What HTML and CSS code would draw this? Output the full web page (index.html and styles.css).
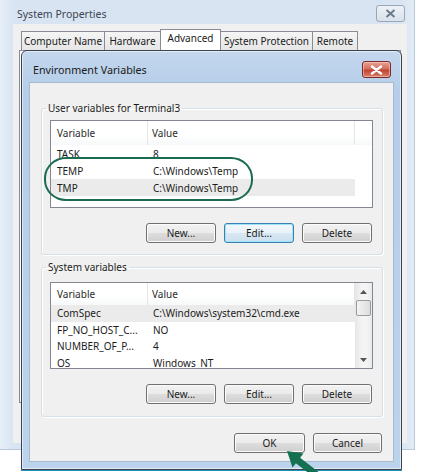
FILE: index.html
```html
<!DOCTYPE html>
<html lang="en">
<head>
<meta charset="utf-8">
<title>Environment Variables</title>
<link rel="stylesheet" href="styles.css">
</head>
<body>
<div class="desktop">
  <div class="win-outer">
    <div class="outer-title">
      <span class="outer-caption">System Properties</span>
      <span class="close-gray"><svg width="11" height="9" viewBox="0 0 11 9"><path d="M1.5 1 L9.5 8 M9.5 1 L1.5 8" stroke="#6d7a8a" stroke-width="2" fill="none"/></svg></span>
    </div>
    <div class="outer-body">
      <div class="tabs">
        <span class="tab t1">Computer Name</span>
        <span class="tab t2">Hardware</span>
        <span class="tab t3 active">Advanced</span>
        <span class="tab t4">System Protection</span>
        <span class="tab t5">Remote</span>
      </div>
      <div class="tab-page"></div>
    </div>
  </div>

  <div class="win-env">
    <div class="env-title">
      <span class="env-caption">Environment Variables</span>
      <span class="close-red"><svg width="13" height="10" viewBox="0 0 13 10"><path d="M2 1.5 L11 8.5 M11 1.5 L2 8.5" stroke="#ffffff" stroke-width="2.4" fill="none" stroke-linecap="round"/></svg></span>
    </div>
    <div class="env-body">
      <fieldset class="group group-user">
        <legend>User variables for Terminal3</legend>
        <div class="list list-user">
          <div class="list-head">
            <span class="c1">Variable</span><span class="c2">Value</span><span class="c3"></span>
          </div>
          <div class="row"><span class="c1">TASK</span><span class="c2">8</span></div>
          <div class="row"><span class="c1">TEMP</span><span class="c2">C:\Windows\Temp</span></div>
          <div class="row sel"><span class="c1">TMP</span><span class="c2">C:\Windows\Temp</span></div>
        </div>
        <div class="btns">
          <button class="btn">New...</button>
          <button class="btn focus">Edit...</button>
          <button class="btn">Delete</button>
        </div>
      </fieldset>

      <fieldset class="group group-sys">
        <legend>System variables</legend>
        <div class="list list-sys">
          <div class="list-main">
            <div class="list-head">
              <span class="c1">Variable</span><span class="c2">Value</span>
            </div>
            <div class="row sel"><span class="c1">ComSpec</span><span class="c2">C:\Windows\system32\cmd.exe</span></div>
            <div class="row"><span class="c1">FP_NO_HOST_C...</span><span class="c2">NO</span></div>
            <div class="row"><span class="c1">NUMBER_OF_P...</span><span class="c2">4</span></div>
            <div class="row"><span class="c1">OS</span><span class="c2">Windows_NT</span></div>
          </div>
          <div class="vscroll">
            <span class="arr"><svg width="7" height="4" viewBox="0 0 7 4"><path d="M0 4 L3.5 0 L7 4Z" fill="#555"/></svg></span>
            <span class="thumb"></span>
            <span class="track"></span>
            <span class="arr"><svg width="7" height="4" viewBox="0 0 7 4"><path d="M0 0 L3.5 4 L7 0Z" fill="#555"/></svg></span>
          </div>
        </div>
        <div class="btns">
          <button class="btn">New...</button>
          <button class="btn">Edit...</button>
          <button class="btn">Delete</button>
        </div>
      </fieldset>

      <div class="dlg-btns">
        <button class="btn ok">OK</button>
        <button class="btn cancel">Cancel</button>
      </div>
    </div>
  </div>

  <div class="highlight"></div>
  <svg class="arrow" width="421" height="472" viewBox="0 0 421 472">
    <polygon points="287,451 303.5,453.4 300.1,457.7 319.9,473 315.7,478.6 295.9,463.3 292.5,467.6" fill="#137050"/>
  </svg>
</div>
</body>
</html>
```

FILE: styles.css
```css
* { box-sizing: border-box; }

html, body {
  margin: 0;
  padding: 0;
  background: #ffffff;
}

body {
  font-family: "Noto Sans", "Open Sans", sans-serif;
  font-size: 10px;
  color: #1b1b1b;
}

.desktop {
  position: relative;
  width: 421px;
  height: 472px;
  overflow: hidden;
  background: #ffffff;
}

/* ---------- outer window (System Properties) ---------- */
.win-outer {
  position: absolute;
  left: 0;
  top: 0;
  width: 415px;
  height: 450px;
  background: linear-gradient(90deg, #e6eef8 0px, #d8e4f2 14px, #d8e4f2 400px, #e3ecf6 415px);
  border-right: 1px solid #b9c9dc;
  border-bottom: 1px solid #b9c9dc;
  display: flex;
  flex-direction: column;
}

.outer-title {
  height: 24px;
  display: flex;
  align-items: flex-start;
  padding-left: 17px;
}

.outer-caption {
  margin-top: 6px;
  font-size: 10.5px;
  line-height: 16px;
  color: #3c4652;
}

.close-gray {
  margin-left: auto;
  margin-right: 9px;
  margin-top: 5px;
  width: 29px;
  height: 17px;
  border: 1px solid #98a6b7;
  border-radius: 3px;
  background: linear-gradient(#eef2f7, #d9e1eb);
  display: flex;
  align-items: center;
  justify-content: center;
}

.outer-body {
  margin: 0 7px 6px 13px;
  flex: 1;
  background: #f0f0f0;
  padding: 5px 6px 40px 6px;
  display: flex;
  flex-direction: column;
}

.tabs {
  display: flex;
  align-items: flex-end;
  height: 21px;
  padding-left: 2px;
}

.tab {
  flex: none;
  height: 19px;
  border: 1px solid #898c95;
  border-bottom: none;
  border-left: none;
  background: linear-gradient(#f5f5f5, #e6e6e6);
  text-align: center;
  line-height: 19px;
  font-size: 10px;
  white-space: nowrap;
  color: #1b1b1b;
}

.tab.t1 { width: 84px; border-left: 1px solid #898c95; }
.tab.t2 { width: 56px; }
.tab.t3 { width: 60px; }
.tab.t4 { width: 92px; }
.tab.t5 { width: 45px; }

.tab.active {
  height: 22px;
  background: #ffffff;
  line-height: 17px;
  margin-bottom: -1px;
  position: relative;
  border-left: 1px solid #898c95;
  margin-left: -1px;
  width: 61px;
}

.tab-page {
  flex: 1;
  background: #fcfcfc;
  border: 1px solid #898c95;
}

/* ---------- Environment Variables window ---------- */
.win-env {
  position: absolute;
  left: 21px;
  top: 50px;
  width: 381px;
  height: 420px;
  border: 1px solid #3a4350;
  border-radius: 6px 6px 0 0;
  background: linear-gradient(#c3d7ee, #b5cde8 40px, #bcd3ec);
  box-shadow: inset 0 0 0 1px rgba(255,255,255,0.55);
  display: flex;
  flex-direction: column;
}

.win-env::after {
  content: "";
  position: absolute;
  left: -1px;
  right: -1px;
  bottom: -2px;
  height: 1px;
  background: #1e8fb5;
}

.env-title {
  height: 31px;
  flex: none;
  display: flex;
  align-items: flex-start;
  padding-left: 11px;
}

.env-caption {
  margin-top: 12px;
  font-size: 10.75px;
  line-height: 14px;
  color: #1a1a1a;
}

.close-red {
  margin-left: auto;
  margin-right: 10px;
  margin-top: 10px;
  width: 29px;
  height: 17px;
  border: 1px solid #7a2a2a;
  border-radius: 3px;
  background: linear-gradient(#e8a194 0%, #d3705f 45%, #c2422f 55%, #d5836c 100%);
  box-shadow: inset 0 0 0 1px rgba(255,210,200,0.55);
  display: flex;
  align-items: center;
  justify-content: center;
}

.env-body {
  flex: 1;
  margin: 0 7px 7px 7px;
  background: #f0f0f0;
  border: 1px solid #a7bad0;
  padding: 18px 10px 0 11px;
  display: flex;
  flex-direction: column;
}

/* ---------- group boxes ---------- */
.group {
  margin: 0;
  border: 1px solid #d5dfe5;
  border-radius: 3px;
  box-shadow: inset 1px 1px 0 #ffffff, 1px 1px 0 #ffffff;
  padding: 5px 9px 11px 8px;
  min-width: 0;
}

.group legend {
  margin-left: -4px;
  padding: 0 2px;
  line-height: 14px;
  font-size: 10px;
  color: #1b1b1b;
}

.group-sys {
  margin-top: 5px;
  padding-top: 8px;
  padding-bottom: 12px;
}

.list {
  border: 1px solid #828790;
  background: #ffffff;
  overflow: hidden;
}

.list-user { height: 88px; }
.list-sys { height: 87px; display: flex; }

.list-main { flex: 1; min-width: 0; }

.list-head {
  display: flex;
  height: 24px;
  align-items: stretch;
  background: linear-gradient(#ffffff, #ffffff 60%, #f7f8f9);
  color: #2b2b2b;
}

.list-sys .list-head { height: 22px; }

.list-head span {
  display: flex;
  align-items: center;
  border-right: 1px solid #e3e5e8;
}

.list-head .c1 { width: 97px; padding-left: 6px; }
.list-head .c2 { width: 207px; padding-left: 4px; }
.list-head .c3 { flex: 1; border-right: none; }

.row {
  display: flex;
  height: 17px;
  align-items: center;
  width: 304px;
}

.list-sys .row { height: 16.5px; }

.row.sel { background: #ebebeb; }

.row .c1 { width: 97px; padding-left: 6px; white-space: nowrap; }
.row .c2 { padding-left: 5px; white-space: nowrap; }

.vscroll {
  width: 17px;
  flex: none;
  display: flex;
  flex-direction: column;
  background: linear-gradient(90deg, #e6e6e6, #f4f4f4 40%, #f4f4f4 70%, #e9e9e9);
}

.vscroll .arr {
  height: 17px;
  flex: none;
  display: flex;
  align-items: center;
  justify-content: center;
}

.vscroll .thumb {
  height: 16px;
  margin: 0 1px;
  border: 1px solid #9a9a9a;
  border-radius: 2px;
  background: linear-gradient(90deg, #f3f3f3, #e8e8e8 50%, #dcdcdc);
  flex: none;
}

.vscroll .track { flex: 1; }

/* ---------- buttons ---------- */
.btns {
  display: flex;
  justify-content: flex-end;
  gap: 8px;
  margin-top: 15px;
  padding-right: 1px;
}

.btn {
  width: 70px;
  height: 20px;
  padding: 0;
  font-family: "Noto Sans", "Open Sans", sans-serif;
  font-size: 10px;
  color: #1b1b1b;
  border: 1px solid #707070;
  border-radius: 3px;
  background: linear-gradient(#f2f2f2 0%, #ebebeb 48%, #dddddd 52%, #cfcfcf 100%);
  box-shadow: inset 0 0 0 1px #fbfbfb;
}

.btn.focus {
  border-color: #3c7fb1;
  box-shadow: inset 0 0 0 1px #9fe3fb;
  background: linear-gradient(#f3f8fb 0%, #e8f2f8 48%, #d8e8f3 52%, #cde0ee 100%);
}

.dlg-btns {
  display: flex;
  justify-content: flex-end;
  gap: 8px;
  margin-top: 16px;
  padding-right: 1px;
}

.btn.ok { width: 71px; }
.btn.cancel { width: 69px; }

/* ---------- annotations ---------- */
.highlight {
  position: absolute;
  left: 44px;
  top: 157px;
  width: 209px;
  height: 44px;
  border: 2.5px solid #1a6b4f;
  border-radius: 22px / 21px;
}

.arrow {
  position: absolute;
  left: 0;
  top: 0;
  pointer-events: none;
}
```
